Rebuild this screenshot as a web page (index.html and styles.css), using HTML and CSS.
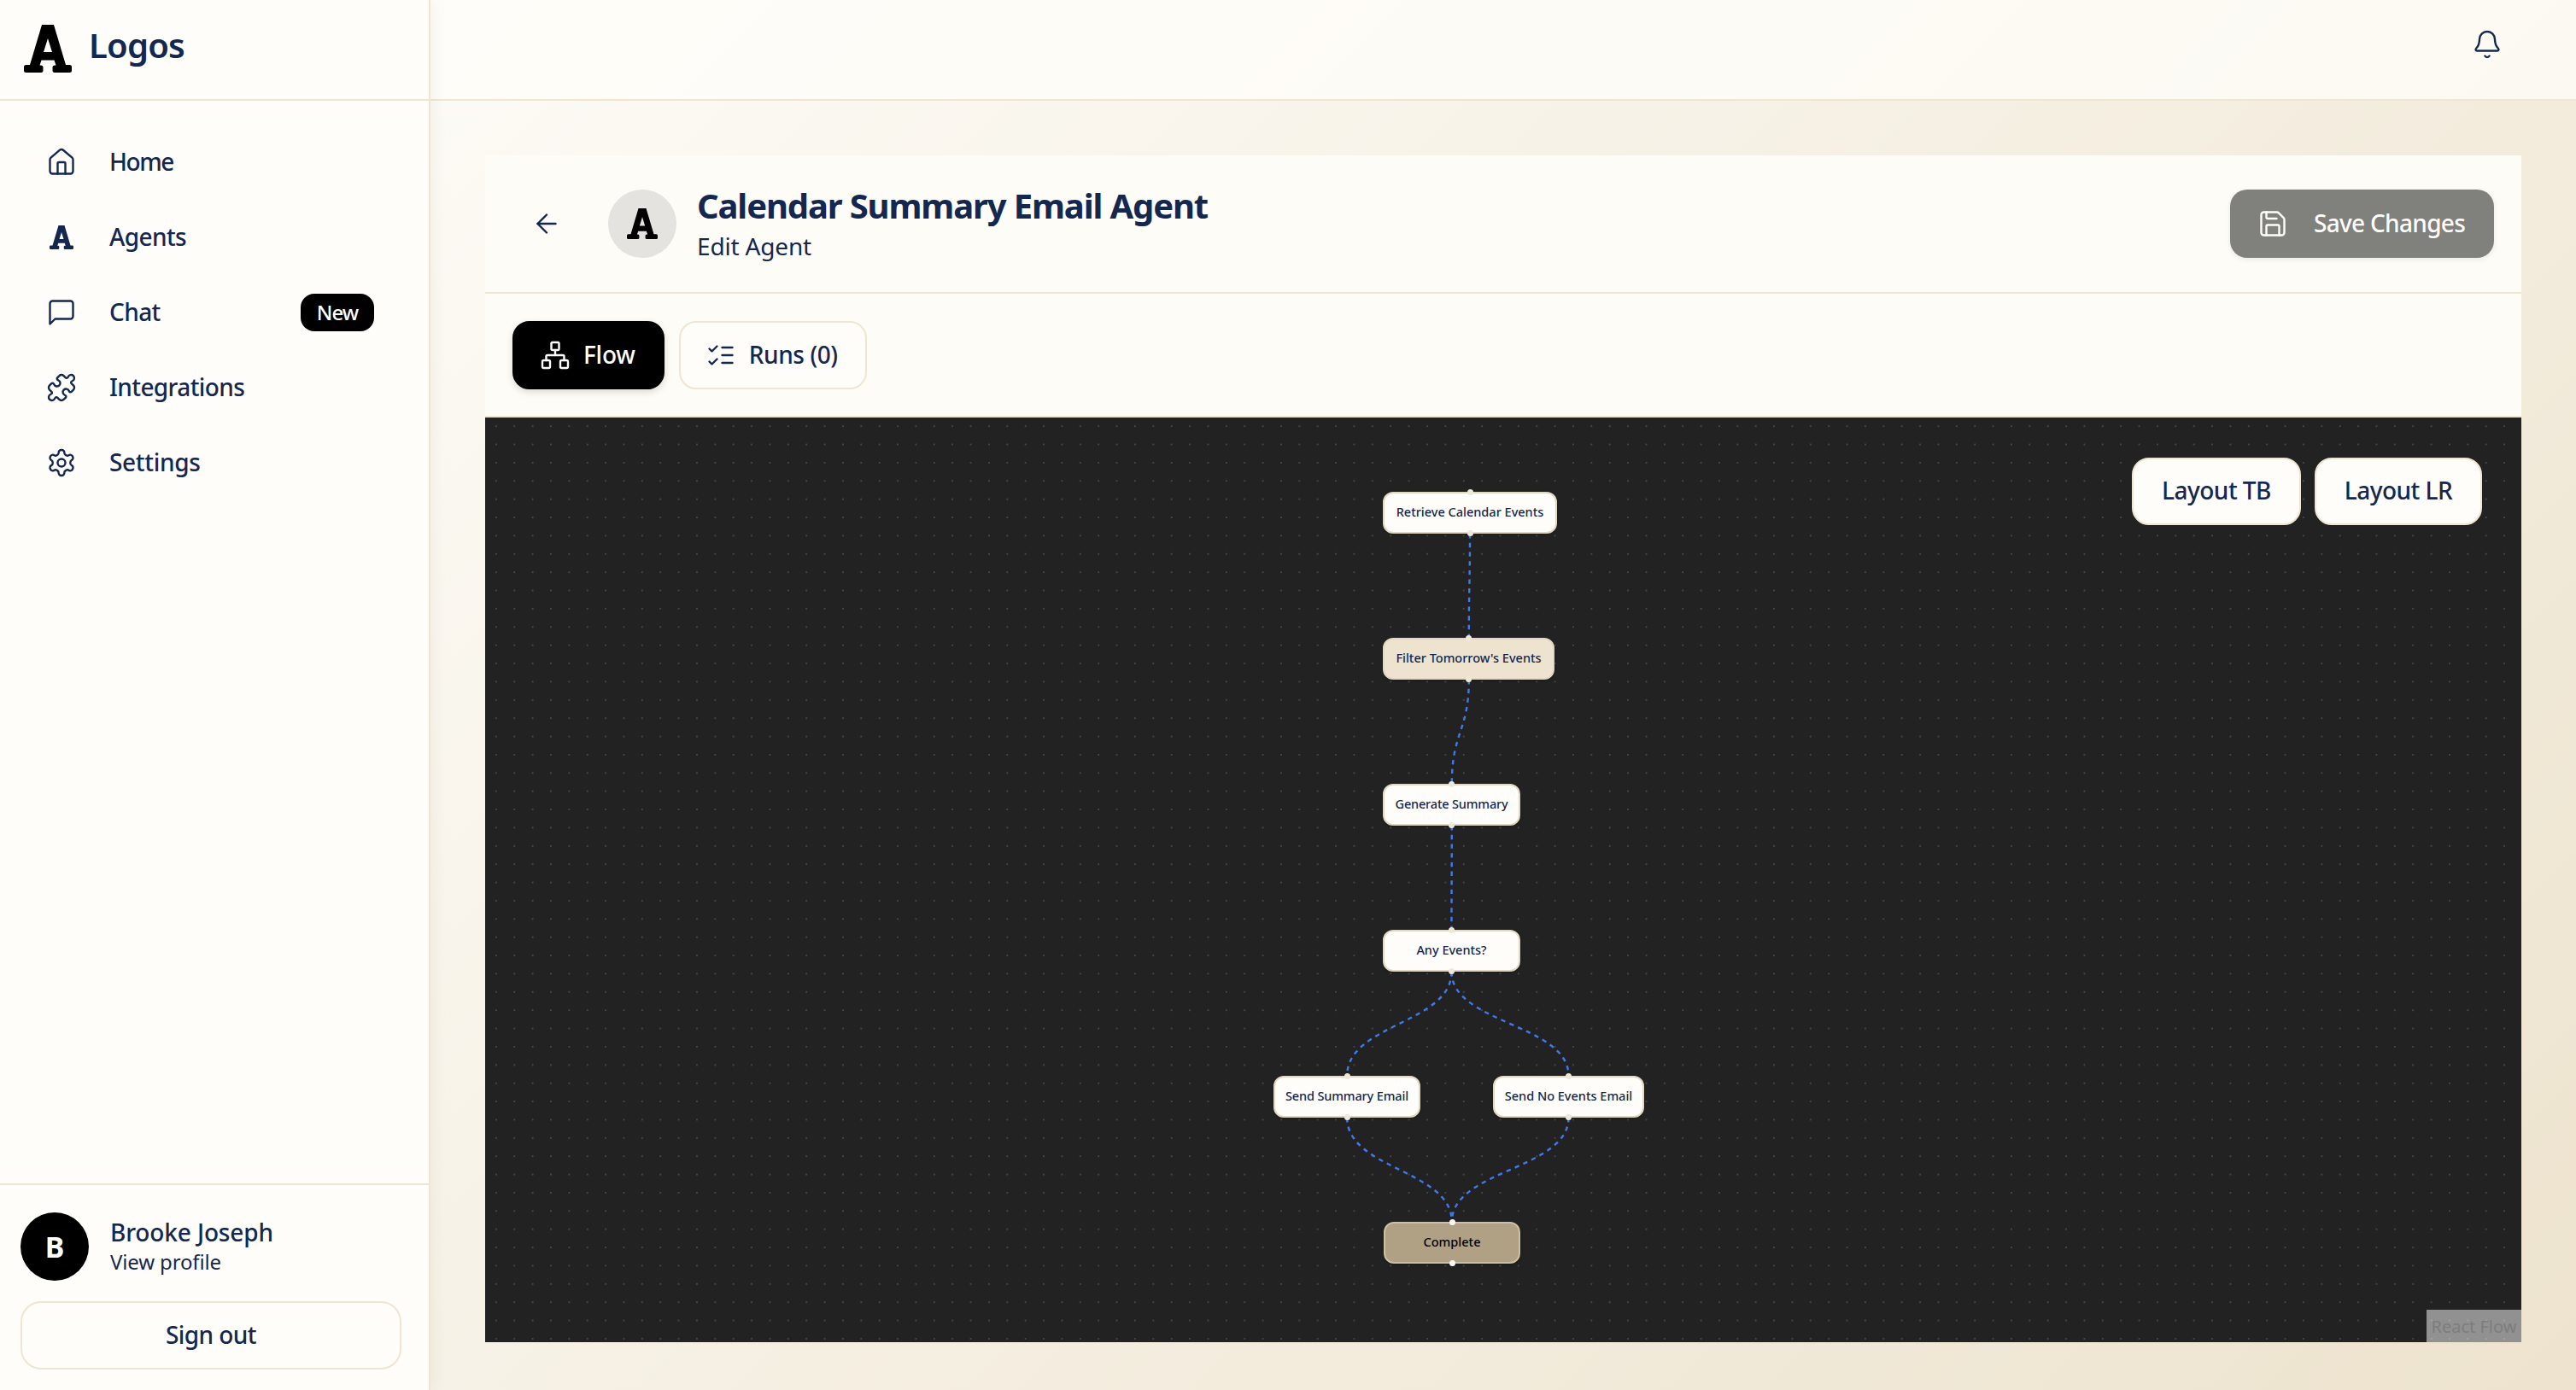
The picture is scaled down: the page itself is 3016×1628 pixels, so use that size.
FILE: index.html
```html
<!DOCTYPE html>
<html lang="en">
<head>
<meta charset="utf-8">
<title>Logos</title>
<link rel="stylesheet" href="styles.css">
</head>
<body>
<svg class="defs" width="0" height="0" aria-hidden="true">
  <symbol id="logo-a" viewBox="0 0 56 56"><path fill="currentColor" fill-rule="evenodd" d="M21 0H35L49 47H53.5A2.5 2.5 0 0 1 56 49.5V53.5A2.5 2.5 0 0 1 53.5 56H36A2.5 2.5 0 0 1 33.5 53.5V50A2.5 2.5 0 0 1 36 47.5H37.5L35.5 41.5H20.5L18.5 47.5H20A2.5 2.5 0 0 1 22.5 50V53.5A2.5 2.5 0 0 1 20 56H2.5A2.5 2.5 0 0 1 0 53.5V49.5A2.5 2.5 0 0 1 2.5 47H7ZM23 32H33L28 16Z"/></symbol>
</svg>
<div class="app">
  <aside class="sidebar">
    <div class="brand">
      <svg class="brand-mark"><use href="#logo-a"/></svg>
      <span class="brand-name">Logos</span>
    </div>
    <nav class="nav">
      <a class="nav-item">
        <svg class="icon" viewBox="0 0 24 24"><path d="M15 21v-8a1 1 0 0 0-1-1h-4a1 1 0 0 0-1 1v8"/><path d="M3 10a2 2 0 0 1 .709-1.528l7-5.999a2 2 0 0 1 2.582 0l7 5.999A2 2 0 0 1 21 10v9a2 2 0 0 1-2 2H5a2 2 0 0 1-2-2z"/></svg>
        <span class="nav-label tight">Home</span>
      </a>
      <a class="nav-item">
        <span class="icon-box"><svg class="nav-a"><use href="#logo-a"/></svg></span>
        <span class="nav-label">Agents</span>
      </a>
      <a class="nav-item">
        <svg class="icon" viewBox="0 0 24 24"><path d="M21 15a2 2 0 0 1-2 2H7l-4 4V5a2 2 0 0 1 2-2h14a2 2 0 0 1 2 2z"/></svg>
        <span class="nav-label">Chat</span>
        <span class="badge">New</span>
      </a>
      <a class="nav-item">
        <svg class="icon" viewBox="0 0 24 24"><path d="M19.439 7.85c-.049.322.059.648.289.878l1.568 1.568c.47.47.706 1.087.706 1.704s-.235 1.233-.706 1.704l-1.611 1.611a.98.98 0 0 1-.837.276c-.47-.07-.802-.48-.968-.925a2.501 2.501 0 1 0-3.214 3.214c.446.166.855.497.925.968a.979.979 0 0 1-.276.837l-1.61 1.61a2.404 2.404 0 0 1-1.705.707 2.402 2.402 0 0 1-1.704-.706l-1.568-1.568a1.026 1.026 0 0 0-.877-.29c-.493.074-.84.504-1.02.968a2.5 2.5 0 1 1-3.237-3.237c.464-.18.894-.527.967-1.02a1.026 1.026 0 0 0-.289-.877l-1.568-1.568A2.402 2.402 0 0 1 1.998 12c0-.617.236-1.234.706-1.704L4.23 8.77c.24-.24.581-.353.917-.303.515.077.877.528 1.073 1.01a2.5 2.5 0 1 0 3.259-3.259c-.482-.196-.933-.558-1.01-1.073-.05-.336.062-.676.303-.917l1.525-1.525A2.402 2.402 0 0 1 12 1.998c.617 0 1.234.236 1.704.706l1.568 1.568c.23.23.556.338.877.29.493-.074.84-.504 1.02-.968a2.5 2.5 0 1 1 3.237 3.237c-.464.18-.894.527-.967 1.02Z"/></svg>
        <span class="nav-label">Integrations</span>
      </a>
      <a class="nav-item">
        <svg class="icon" viewBox="0 0 24 24"><path d="M12.22 2h-.44a2 2 0 0 0-2 2v.18a2 2 0 0 1-1 1.73l-.43.25a2 2 0 0 1-2 0l-.15-.08a2 2 0 0 0-2.73.73l-.22.38a2 2 0 0 0 .73 2.73l.15.1a2 2 0 0 1 1 1.72v.51a2 2 0 0 1-1 1.74l-.15.09a2 2 0 0 0-.73 2.73l.22.38a2 2 0 0 0 2.73.73l.15-.08a2 2 0 0 1 2 0l.43.25a2 2 0 0 1 1 1.73V20a2 2 0 0 0 2 2h.44a2 2 0 0 0 2-2v-.18a2 2 0 0 1 1-1.73l.43-.25a2 2 0 0 1 2 0l.15.08a2 2 0 0 0 2.73-.73l.22-.39a2 2 0 0 0-.73-2.73l-.15-.08a2 2 0 0 1-1-1.74v-.5a2 2 0 0 1 1-1.74l.15-.09a2 2 0 0 0 .73-2.73l-.22-.38a2 2 0 0 0-2.73-.73l-.15.08a2 2 0 0 1-2 0l-.43-.25a2 2 0 0 1-1-1.73V4a2 2 0 0 0-2-2z"/><circle cx="12" cy="12" r="3"/></svg>
        <span class="nav-label loose">Settings</span>
      </a>
    </nav>
    <div class="account">
      <div class="profile">
        <span class="profile-avatar">B</span>
        <div class="profile-text">
          <span class="profile-name">Brooke Joseph</span>
          <span class="profile-link">View profile</span>
        </div>
      </div>
      <button class="signout">Sign out</button>
    </div>
  </aside>

  <div class="main">
    <header class="topbar">
      <svg class="icon bell" viewBox="0 0 24 24"><path d="M10.268 21a2 2 0 0 0 3.464 0"/><path d="M3.262 15.326A1 1 0 0 0 4 17h16a1 1 0 0 0 .74-1.673C19.41 13.956 18 12.499 18 8A6 6 0 0 0 6 8c0 4.499-1.411 5.956-2.738 7.326"/></svg>
    </header>
    <section class="content">
      <div class="card">
        <div class="card-head">
          <button class="back"><svg class="icon" viewBox="0 0 24 24"><path d="m12 19-7-7 7-7"/><path d="M19 12H5"/></svg></button>
          <span class="agent-avatar"><svg class="agent-a"><use href="#logo-a"/></svg></span>
          <div class="agent-text">
            <h1 class="agent-title">Calendar Summary Email Agent</h1>
            <span class="agent-sub">Edit Agent</span>
          </div>
          <button class="save">
            <svg class="icon" viewBox="0 0 24 24"><path d="M15.2 3a2 2 0 0 1 1.4.6l3.8 3.8a2 2 0 0 1 .6 1.4V19a2 2 0 0 1-2 2H5a2 2 0 0 1-2-2V5a2 2 0 0 1 2-2z"/><path d="M17 21v-7a1 1 0 0 0-1-1H8a1 1 0 0 0-1 1v7"/><path d="M7 3v4a1 1 0 0 0 1 1h7"/></svg>
            <span class="btn-label save-label">Save Changes</span>
          </button>
        </div>
        <div class="tabs">
          <button class="tab tab-active">
            <svg class="icon" viewBox="0 0 24 24"><rect x="16" y="16" width="6" height="6" rx="1"/><rect x="2" y="16" width="6" height="6" rx="1"/><rect x="9" y="2" width="6" height="6" rx="1"/><path d="M5 16v-3a1 1 0 0 1 1-1h12a1 1 0 0 1 1 1v3"/><path d="M12 12V8"/></svg>
            <span class="btn-label">Flow</span>
          </button>
          <button class="tab">
            <svg class="icon" viewBox="0 0 24 24"><path d="m3 17 2 2 4-4"/><path d="m3 7 2 2 4-4"/><path d="M13 6h8"/><path d="M13 12h8"/><path d="M13 18h8"/></svg>
            <span class="btn-label runs-label">Runs (0)</span>
          </button>
        </div>
        <div class="canvas">
          <svg class="edges" viewBox="0 0 2384 1083">
            <path d="M1153 136C1153 197 1151.8 197 1151.8 258"/>
            <path d="M1151.8 307C1151.8 368 1131.8 368 1131.8 429"/>
            <path d="M1131.8 478C1131.8 539 1131.5 539 1131.5 600"/>
            <path d="M1131.5 649C1131.5 710 1009.2 710 1009.2 771"/>
            <path d="M1131.5 649C1131.5 710 1268.5 710 1268.5 771"/>
            <path d="M1009.2 820C1009.2 881 1131.8 881 1131.8 942"/>
            <path d="M1268.5 820C1268.5 881 1131.8 881 1131.8 942"/>
          </svg>
          <div class="node n-retrieve">Retrieve Calendar Events</div>
          <div class="node n-filter">Filter Tomorrow's Events</div>
          <div class="node n-generate">Generate Summary</div>
          <div class="node n-any">Any Events?</div>
          <div class="node n-summary">Send Summary Email</div>
          <div class="node n-none">Send No Events Email</div>
          <div class="node n-complete">Complete</div>
          <div class="layout-btns">
            <button class="layout-btn">Layout TB</button>
            <button class="layout-btn">Layout LR</button>
          </div>
          <a class="attribution">React Flow</a>
        </div>
      </div>
    </section>
  </div>
</div>
</body>
</html>
```
FILE: styles.css
```css
* { box-sizing: border-box; }
html, body { margin: 0; height: 100%; }
body {
  font-family: "Noto Sans", "Open Sans", sans-serif;
  color: #14284f;
  background: linear-gradient(135deg, #fffefb 0%, #ede3ce 100%);
  overflow: hidden;
}
button { font: inherit; color: inherit; cursor: pointer; white-space: nowrap; }
.defs { position: absolute; }
.app { display: flex; height: 1628px; }

.sidebar {
  width: 504px;
  flex: none;
  display: flex;
  flex-direction: column;
  background: #fffdf9;
  border-right: 2px solid #efe5d2;
  box-shadow: 0 0 20px rgba(60, 40, 10, .07);
  position: relative;
}
.brand {
  height: 118px;
  border-bottom: 2px solid #efe5d2;
  padding: 0 0 8px 28px;
  display: flex;
  align-items: center;
  gap: 20px;
}
.brand-mark { width: 56px; height: 56px; color: #000; margin-top: 6px; }
.brand-name { font-size: 40px; font-weight: 600; letter-spacing: -.8px; padding-bottom: 4px; }
.nav { flex: 1; padding-top: 28px; padding-left: 54px; padding-right: 64px; }
.nav-item {
  display: flex;
  align-items: center;
  height: 88px;
  gap: 38px;
  font-size: 28px;
  font-weight: 500;
}
.nav-label { letter-spacing: -.6px; padding-bottom: 2px; }
.nav-label.tight { letter-spacing: -1.4px; }
.nav-label.loose { letter-spacing: -.3px; }
.icon {
  width: 36px;
  height: 36px;
  flex: none;
  fill: none;
  stroke: currentColor;
  stroke-width: 1.6;
  stroke-linecap: round;
  stroke-linejoin: round;
}
.icon-box { width: 36px; height: 36px; flex: none; display: flex; align-items: center; justify-content: center; }
.nav-a { width: 28px; height: 28px; }
.badge {
  margin-left: auto;
  width: 86px;
  height: 44px;
  border-radius: 16px;
  background: #000;
  color: #fff;
  font-size: 24px;
  letter-spacing: -1px;
  padding-bottom: 2px;
  display: flex;
  align-items: center;
  justify-content: center;
}
.account { border-top: 2px solid #efe5d2; padding: 32px 32px 24px 24px; height: 242px; }
.profile { display: flex; align-items: center; gap: 25px; height: 80px; }
.profile-avatar {
  width: 80px;
  height: 80px;
  border-radius: 50%;
  background: #000;
  color: #fff;
  font-size: 34px;
  font-weight: 700;
  display: flex;
  align-items: center;
  justify-content: center;
}
.profile-text { display: flex; flex-direction: column; padding-bottom: 3px; }
.profile-name { font-size: 28px; font-weight: 500; line-height: 38px; letter-spacing: -.13px; }
.profile-link { font-size: 24px; line-height: 32px; letter-spacing: -.14px; }
.signout {
  margin-top: 24px;
  width: 446px;
  height: 80px;
  background: #fffdf9;
  border: 2px solid #efe5d2;
  border-radius: 24px;
  font-size: 28px;
  font-weight: 500;
  letter-spacing: -.57px;
  padding-bottom: 4px;
}

.main { flex: 1; min-width: 0; display: flex; flex-direction: column; }
.topbar {
  height: 118px;
  flex: none;
  border-bottom: 2px solid #efe5d2;
  background: rgba(255, 254, 250, .75);
  display: flex;
  align-items: center;
  justify-content: flex-end;
  padding: 0 86px 12px 0;
}
.content { flex: 1; padding: 64px 64px 56px; min-height: 0; }
.card { height: 100%; display: flex; flex-direction: column; background: #fdfcf7; }
.card-head {
  height: 162px;
  flex: none;
  border-bottom: 2px solid #efe5d2;
  padding: 0 32px;
  display: flex;
  align-items: center;
}
.back {
  width: 80px;
  height: 80px;
  border: 0;
  background: none;
  padding: 0;
  display: flex;
  align-items: center;
  justify-content: center;
  margin-right: 32px;
}
.agent-avatar {
  width: 80px;
  height: 80px;
  border-radius: 50%;
  background: #e4e3df;
  color: #000;
  display: flex;
  align-items: center;
  justify-content: center;
  margin-right: 24px;
}
.agent-a { width: 36px; height: 36px; }
.agent-text { flex: 1; display: flex; flex-direction: column; }
.agent-title { margin: 0; font-size: 40px; line-height: 50px; font-weight: 700; letter-spacing: -1.14px; }
.agent-sub { font-size: 28px; line-height: 40px; letter-spacing: -.17px; padding-top: 2px; }
.save {
  width: 309px;
  height: 80px;
  border: 0;
  border-radius: 20px;
  background: #80807c;
  color: #fffdf9;
  font-size: 28px;
  font-weight: 500;
  display: flex;
  align-items: center;
  padding: 0 32px;
  gap: 30px;
  box-shadow: 0 2px 6px rgba(0, 0, 0, .08);
}
.btn-label { padding-bottom: 2px; letter-spacing: -.2px; }
.save-label { letter-spacing: -.7px; }
.runs-label { letter-spacing: -.4px; }
.tabs {
  height: 145px;
  flex: none;
  border-bottom: 2px solid #efe5d2;
  padding: 32px 32px 0;
  display: flex;
  gap: 17px;
  align-items: flex-start;
}
.tab {
  height: 80px;
  border: 2px solid #efe5d2;
  border-radius: 20px;
  background: #fffdf9;
  font-size: 28px;
  font-weight: 500;
  display: flex;
  align-items: center;
  gap: 15px;
  padding: 0 32px 0 29px;
}
.tab-active {
  background: #000;
  border-color: #000;
  color: #fff;
  padding-left: 30px;
  box-shadow: 0 3px 8px rgba(0, 0, 0, .15);
}

.canvas {
  flex: 1;
  min-height: 0;
  position: relative;
  overflow: hidden;
  background-color: #222;
  background-image: radial-gradient(circle, #454545 .8px, transparent 1.2px);
  background-size: 21.38px 21.38px;
  background-position: 2.15px -0.5px;
}
.edges { position: absolute; inset: 0; width: 100%; height: 100%; fill: none; stroke: #4079ee; stroke-width: 2.4; stroke-dasharray: 5.35 5.35; }
.node {
  position: absolute;
  height: 49px;
  border: 2px solid #e2d8c2;
  border-radius: 12px;
  background: #fffdf9;
  font-size: 14.5px;
  font-weight: 500;
  padding-bottom: 3px;
  display: flex;
  align-items: center;
  justify-content: center;
  box-shadow: 0 1px 3px rgba(0, 0, 0, .25);
  white-space: nowrap;
}
.node::before, .node::after {
  content: "";
  position: absolute;
  left: 50%;
  width: 7px;
  height: 7px;
  margin-left: -3.5px;
  border-radius: 50%;
  background: #efe8d8;
}
.node::before { top: -5px; }
.node::after { bottom: -5px; }
.n-retrieve { left: 1051px; top: 87px; width: 204px; }
.n-filter { left: 1051px; top: 258px; width: 201px; background: #ede3cf; }
.n-generate { left: 1051px; top: 429px; width: 161px; letter-spacing: -.17px; }
.n-any { left: 1051px; top: 600px; width: 161px; }
.n-summary { left: 923px; top: 771px; width: 172px; letter-spacing: -.14px; }
.n-none { left: 1180px; top: 771px; width: 177px; }
.n-complete { left: 1052px; top: 942px; width: 160px; background: #b0a084; color: #000; border-color: #cdbfa4; }
.n-complete::before, .n-complete::after { background: #fbf8f1; }
.layout-btns { position: absolute; top: 47px; right: 46px; display: flex; gap: 16px; }
.layout-btn {
  height: 79px;
  width: 198px;
  padding: 0 0 4px;
  border: 2px solid #efe5d2;
  border-radius: 20px;
  background: #fffdf9;
  font-size: 28px;
  font-weight: 500;
  letter-spacing: -.52px;
}
.layout-btn:last-child { width: 196px; }
.attribution {
  position: absolute;
  right: 0;
  bottom: 0;
  width: 111px;
  height: 38px;
  background: rgba(255, 255, 255, .5);
  color: #7d7d7d;
  font-size: 20px;
  display: flex;
  align-items: center;
  justify-content: center;
  white-space: nowrap;
}
```
